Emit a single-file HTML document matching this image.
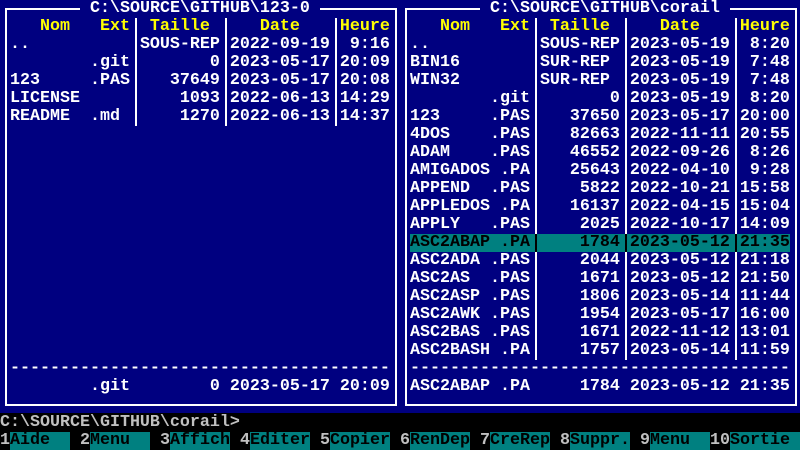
<!DOCTYPE html>
<html><head><meta charset="utf-8"><style>
*{margin:0;padding:0;box-sizing:border-box}
body{width:800px;height:450px;background:#000;overflow:hidden;position:relative;font-family:"Liberation Mono","DejaVu Sans Mono",monospace;font-size:16.67px;line-height:18px;font-weight:bold}
#blue{position:absolute;left:0;top:0;width:800px;height:413px;background:#000080}
.t{position:absolute;white-space:pre;height:18px;line-height:18px}
.w{color:#fff}.y{color:#ffff00}.g{color:#c0c0c0}.k{color:#000}
.l{position:absolute;background:#fff}
.hl{position:absolute;background:#008080}
.fk{position:absolute;top:432px;height:18px;background:#008080;color:#000;white-space:pre;line-height:18px}
.fn{position:absolute;top:432px;color:#c0c0c0;white-space:pre;line-height:18px}
</style></head><body>
<div id="blue"></div>
<div class="l" style="left:5px;top:8px;width:392px;height:2px"></div>
<div class="l" style="left:5px;top:404px;width:392px;height:2px"></div>
<div class="l" style="left:5px;top:8px;width:2px;height:398px"></div>
<div class="l" style="left:395px;top:8px;width:2px;height:398px"></div>
<div class="l" style="left:405px;top:8px;width:392px;height:2px"></div>
<div class="l" style="left:405px;top:404px;width:392px;height:2px"></div>
<div class="l" style="left:405px;top:8px;width:2px;height:398px"></div>
<div class="l" style="left:795px;top:8px;width:2px;height:398px"></div>
<div class="hl" style="left:410px;top:234px;width:380px;height:18px"></div>
<div class="l" style="left:135px;top:18px;width:2px;height:108px"></div>
<div class="l" style="left:225px;top:18px;width:2px;height:108px"></div>
<div class="l" style="left:335px;top:18px;width:2px;height:108px"></div>
<div class="l" style="left:535px;top:18px;width:2px;height:342px"></div>
<div class="l" style="left:625px;top:18px;width:2px;height:342px"></div>
<div class="l" style="left:735px;top:18px;width:2px;height:342px"></div>
<div style="position:absolute;left:535px;top:234px;width:2px;height:18px;background:#000"></div>
<div style="position:absolute;left:625px;top:234px;width:2px;height:18px;background:#000"></div>
<div style="position:absolute;left:735px;top:234px;width:2px;height:18px;background:#000"></div>
<div class="t w" style="left:80px;top:0;background:#000080"> C:\SOURCE\GITHUB\123-0 </div>
<div class="t w" style="left:480px;top:0;background:#000080"> C:\SOURCE\GITHUB\corail </div>
<div class="t y" style="left:10px;top:18px">   Nom   Ext  Taille     Date    Heure</div>
<div class="t w" style="left:10px;top:36px">..           SOUS-REP 2022-09-19  9:16
        .git        0 2023-05-17 20:09
123     .PAS    37649 2023-05-17 20:08
LICENSE          1093 2022-06-13 14:29
README  .md      1270 2022-06-13 14:37</div>
<div class="t w" style="left:10px;top:360px">--------------------------------------
        .git        0 2023-05-17 20:09</div>
<div class="t y" style="left:410px;top:18px">   Nom   Ext  Taille     Date    Heure</div>
<div class="t w" style="left:410px;top:36px">..           SOUS-REP 2023-05-19  8:20
BIN16        SUR-REP  2023-05-19  7:48
WIN32        SUR-REP  2023-05-19  7:48
        .git        0 2023-05-19  8:20
123     .PAS    37650 2023-05-17 20:00
4DOS    .PAS    82663 2022-11-11 20:55
ADAM    .PAS    46552 2022-09-26  8:26
AMIGADOS .PA    25643 2022-04-10  9:28
APPEND  .PAS     5822 2022-10-21 15:58
APPLEDOS .PA    16137 2022-04-15 15:04
APPLY   .PAS     2025 2022-10-17 14:09</div>
<div class="t k" style="left:410px;top:234px">ASC2ABAP .PA     1784 2023-05-12 21:35</div>
<div class="t w" style="left:410px;top:252px">ASC2ADA .PAS     2044 2023-05-12 21:18
ASC2AS  .PAS     1671 2023-05-12 21:50
ASC2ASP .PAS     1806 2023-05-14 11:44
ASC2AWK .PAS     1954 2023-05-17 16:00
ASC2BAS .PAS     1671 2022-11-12 13:01
ASC2BASH .PA     1757 2023-05-14 11:59</div>
<div class="t w" style="left:410px;top:360px">--------------------------------------
ASC2ABAP .PA     1784 2023-05-12 21:35</div>
<div class="t g" style="left:0;top:414px">C:\SOURCE\GITHUB\corail&gt;</div>
<div class="fn" style="left:0">1</div><div class="fk" style="left:10px;width:60px">Aide  </div>
<div class="fn" style="left:80px">2</div><div class="fk" style="left:90px;width:60px">Menu  </div>
<div class="fn" style="left:160px">3</div><div class="fk" style="left:170px;width:60px">Affich</div>
<div class="fn" style="left:240px">4</div><div class="fk" style="left:250px;width:60px">Editer</div>
<div class="fn" style="left:320px">5</div><div class="fk" style="left:330px;width:60px">Copier</div>
<div class="fn" style="left:400px">6</div><div class="fk" style="left:410px;width:60px">RenDep</div>
<div class="fn" style="left:480px">7</div><div class="fk" style="left:490px;width:60px">CreRep</div>
<div class="fn" style="left:560px">8</div><div class="fk" style="left:570px;width:60px">Suppr.</div>
<div class="fn" style="left:640px">9</div><div class="fk" style="left:650px;width:60px">Menu  </div>
<div class="fn" style="left:710px">10</div><div class="fk" style="left:730px;width:70px">Sortie</div>
</body></html>
